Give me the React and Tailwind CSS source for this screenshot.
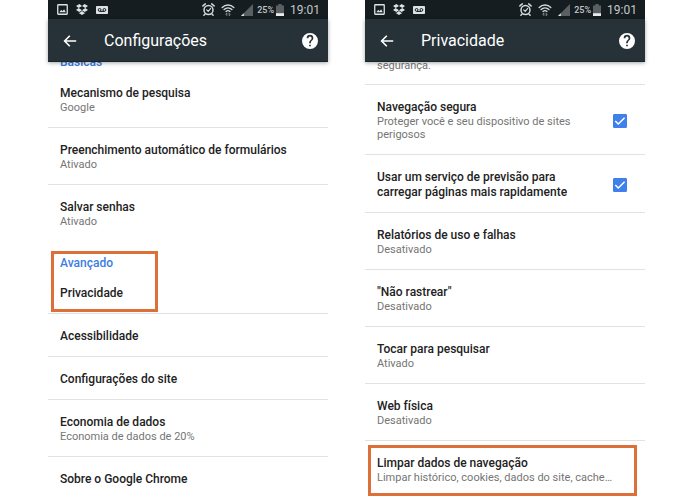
import React from 'react';

function StatusBar() {
  return (
    <div className="flex h-[19px] shrink-0 items-center bg-[#151d20] pl-[9px] pr-2 text-[#c3c8ca]">
      <div className="flex flex-1 items-center gap-2">
        <svg className="size-[11px]" viewBox="0 0 11 11" fill="none">
          <rect x="0.75" y="0.75" width="9.5" height="9.5" rx="0.5" stroke="#dfe2e3" strokeWidth="1.3" />
          <path d="M2.4 8.3 4.2 5.8l1.3 1.4 1.6-2 1.7 3.1Z" fill="#dfe2e3" />
        </svg>
        <svg className="h-[11px] w-3" viewBox="0 0 12 11" fill="#dfe2e3">
          <path d="M3.4 0 6 2 2.7 4.1 0 2Z" />
          <path d="M8.6 0 12 2 9.3 4.1 6 2Z" />
          <path d="M0 6.1 2.7 4.1 6 6.2 3.4 8.1Z" />
          <path d="M12 6.1 9.3 4.1 6 6.2 8.6 8.1Z" />
          <path d="M2.7 8.5 3.4 8.9 6 7.1l2.6 1.8.7-.4v.6L6 11 2.7 9.1Z" />
        </svg>
        <svg className="h-2 w-3" viewBox="0 0 12 8" fill="none">
          <rect width="12" height="8" rx="0.8" fill="#dfe2e3" />
          <circle cx="3.6" cy="3.9" r="1.4" stroke="#151d20" />
          <circle cx="8.4" cy="3.9" r="1.4" stroke="#151d20" />
          <path d="M3.6 5.4h4.8" stroke="#151d20" />
        </svg>
      </div>
      <div className="flex items-center">
        <svg className="mr-1.5 size-[13px]" viewBox="0 0 13 13" fill="none" stroke="#d5d9da" strokeLinecap="round">
          <circle cx="6.5" cy="7" r="4.5" strokeWidth="1.5" />
          <path d="M.9 2.9 3.3.9M12.1 2.9 9.7.9M2.9 11.2l-1 1M10.1 11.2l1 1" strokeWidth="1.5" />
          <path d="m4.7 6.9 1.5 1.5 2.5-3" strokeWidth="1.2" />
        </svg>
        <svg className="mr-1.5 h-3 w-[14px]" viewBox="0 0 14 12" fill="none" stroke="#d5d9da" strokeLinecap="round">
          <path d="M1.2 3.4C4.4.2 9.6.2 12.8 3.4" strokeWidth="1.4" />
          <path d="M3.1 5.5c2.2-2.1 5.6-2.1 7.8 0" strokeWidth="1.4" />
          <path d="M5 7.4c1.2-1 2.8-1 4 0" strokeWidth="1.3" />
          <path d="M5.8 11.5V9.2M4.7 10.1l1.1-1M8.2 9v2.4M9.3 10.5l-1.1 1" stroke="#8c9295" strokeWidth="0.9" />
        </svg>
        <svg className="mr-1 size-3" viewBox="0 0 12 12">
          <path d="M12 0v12H0Z" fill="#596064" />
          <path d="M2.8 9.2V12H0Z" fill="#e8eaeb" />
        </svg>
        <span className="mr-0.5 text-[9px] leading-3 font-medium">25%</span>
        <svg className="mr-1.5 h-3 w-2" viewBox="0 0 8 12">
          <path d="M2.3 0h3.4v1.5H8V12H0V1.5h2.3Z" fill="#596064" />
          <path d="M0 9.2h8V12H0Z" fill="#e8eaeb" />
        </svg>
        <span className="text-xs leading-[18px]">19:01</span>
      </div>
    </div>
  );
}

function AppBar({ title }) {
  return (
    <header className="relative z-10 flex h-[43px] shrink-0 items-center border-b border-[#18272d] bg-[#263238] px-[10px] pt-0.5 text-white shadow-[0_1px_4px_rgba(0,0,0,0.35)]">
      <button type="button" aria-label="Voltar" className="flex h-6 w-6 items-center justify-center">
        <svg className="h-3 w-[14px]" viewBox="0 0 14 12" fill="none" stroke="currentColor" strokeWidth="1.6">
          <path d="M13.2 6H1.8M6.8.8 1.6 6l5.2 5.2" />
        </svg>
      </button>
      <h1 className="ml-[22px] flex-1 text-base leading-5">{title}</h1>
      <button type="button" aria-label="Ajuda" className="flex size-4 items-center justify-center">
        <svg className="size-4" viewBox="0 0 24 24" fill="currentColor">
          <path d="M12 0a12 12 0 1 0 0 24 12 12 0 0 0 0-24Zm1.3 20h-2.6v-2.5h2.6Zm2.6-9.5-1.2 1.2c-.9.9-1.4 1.7-1.4 3.6h-2.6v-.6c0-1.4.6-2.6 1.5-3.6l1.5-1.5c.5-.5.7-1.1.7-1.8a2.4 2.4 0 0 0-4.8 0H7a5 5 0 0 1 10 0c0 1.1-.4 2-1.1 2.7Z" />
        </svg>
      </button>
    </header>
  );
}

function Phone({ title, children }) {
  return (
    <section className="flex min-w-0 flex-1 flex-col">
      <StatusBar />
      <AppBar title={title} />
      <div className="flex flex-col">{children}</div>
    </section>
  );
}

function RowText({ title, sub }) {
  return (
    <>
      <span className="block text-xs leading-[15px] font-medium text-[#222222]">{title}</span>
      {sub && <span className="block pb-px text-[11px] leading-[13px] text-[#757575]">{sub}</span>}
    </>
  );
}

function Row({ title, sub, divider = true, children }) {
  return (
    <div className={divider ? 'relative border-b border-[#e2e2e2]' : 'relative'}>
      <button type="button" className="block w-full px-3 pt-[15px] pb-3 text-left">
        <RowText title={title} sub={sub} />
      </button>
      {children}
    </div>
  );
}

function CheckRow({ id, title, sub }) {
  return (
    <div className="flex items-center gap-4 border-b border-[#e2e2e2] pt-[15px] pr-[18px] pb-3 pl-3">
      <label htmlFor={id} className="max-w-[206px] flex-1">
        <RowText title={title} sub={sub} />
      </label>
      <span className="ml-auto grid size-[14px] shrink-0">
        <input
          id={id}
          type="checkbox"
          defaultChecked
          className="peer col-start-1 row-start-1 size-[14px] appearance-none rounded-[1px] border border-[#757575] checked:border-[#4080ea] checked:bg-[#4080ea]"
        />
        <svg
          className="pointer-events-none invisible col-start-1 row-start-1 size-[14px] peer-checked:visible"
          viewBox="0 0 14 14"
          fill="none"
          stroke="white"
          strokeWidth="1.5"
        >
          <path d="m2.3 7 3 3 6.3-6.3" />
        </svg>
      </span>
    </div>
  );
}

export default function App() {
  return (
    <main className="flex h-screen gap-[37px] overflow-hidden bg-white pr-[50px] pl-12 font-[Roboto,'Liberation_Sans',sans-serif]">
      <Phone title="Configurações">
        <div className="flex h-[9px] items-end px-3 pb-px">
          <h2 className="text-xs leading-[15px] font-medium text-[#3b78d8]">Básicas</h2>
        </div>
        <Row title="Mecanismo de pesquisa" sub="Google" />
        <Row title="Preenchimento automático de formulários" sub="Ativado" />
        <Row title="Salvar senhas" sub="Ativado" divider={false} />
        <div className="relative">
          <h2 className="px-3 pt-[15px] text-xs leading-[15px] font-medium text-[#3b7de0]">Avançado</h2>
          <Row title="Privacidade" />
          <div className="pointer-events-none absolute top-[10px] left-[3px] h-[61px] w-[107px] border-[3px] border-[#dc7038]" />
        </div>
        <Row title="Acessibilidade" />
        <Row title="Configurações do site" />
        <Row title="Economia de dados" sub="Economia de dados de 20%" />
        <Row title="Sobre o Google Chrome" divider={false} />
      </Phone>
      <Phone title="Privacidade">
        <div className="flex h-[23px] items-end border-b border-[#e2e2e2] px-3 pb-3">
          <p className="text-[11px] leading-[13px] text-[#757575]">segurança.</p>
        </div>
        <CheckRow id="safe-browsing" title="Navegação segura" sub="Proteger você e seu dispositivo de sites perigosos" />
        <CheckRow id="prediction" title="Usar um serviço de previsão para carregar páginas mais rapidamente" />
        <Row title="Relatórios de uso e falhas" sub="Desativado" />
        <Row title={'"Não rastrear"'} sub="Desativado" />
        <Row title="Tocar para pesquisar" sub="Ativado" />
        <Row title="Web física" sub="Desativado" />
        <Row title="Limpar dados de navegação" sub="Limpar histórico, cookies, dados do site, cache…" divider={false}>
          <div className="pointer-events-none absolute top-1 right-2 bottom-px left-[3px] border-[3px] border-[#dc7038]" />
        </Row>
      </Phone>
    </main>
  );
}
